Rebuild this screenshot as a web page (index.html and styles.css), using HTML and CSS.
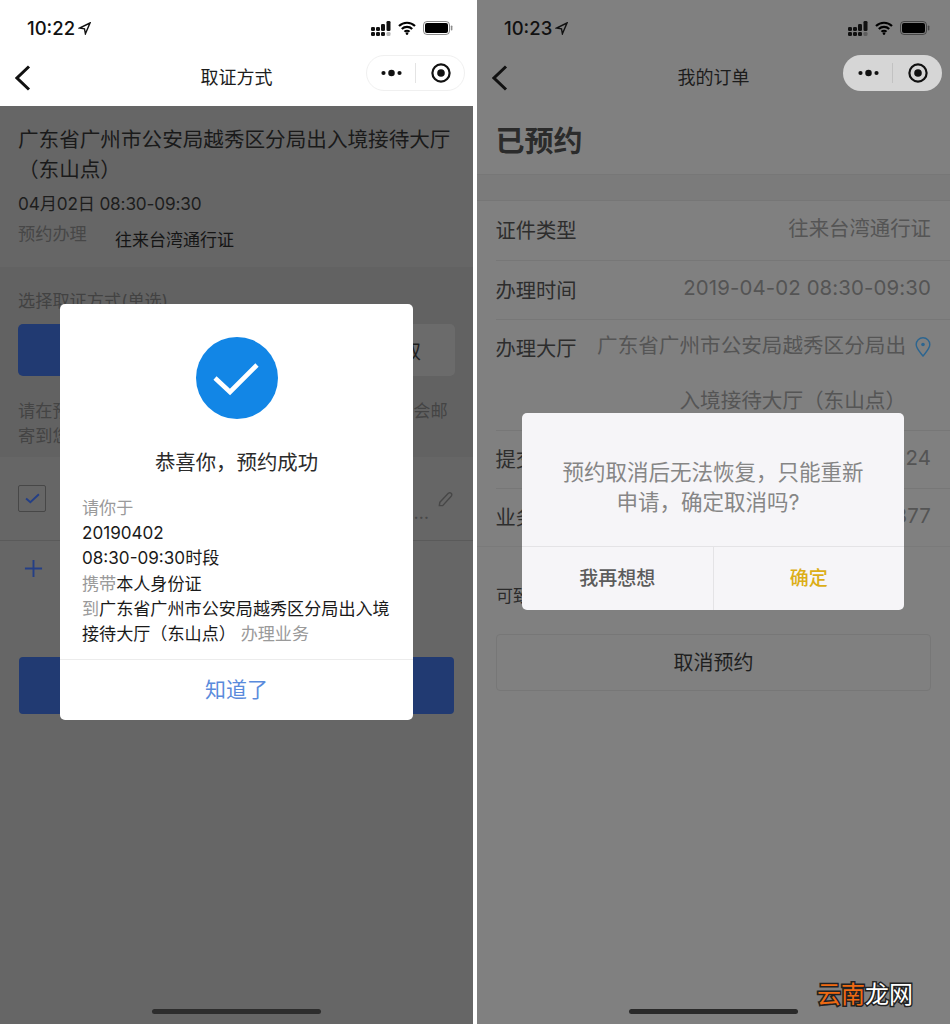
FILE: index.html
```html
<!DOCTYPE html>
<html lang="zh-CN">
<head>
<meta charset="utf-8">
<title>取证方式</title>
<link rel="stylesheet" href="styles.css">
</head>
<body>
<main class="screen">
  <section class="phone phone-light">
    <header class="top">
      <div class="status">
        <span class="time">10:22</span>
        <svg class="loc" viewBox="0 0 13 13"><path d="M12 1 1.5 6l5 .8.9 5z"/></svg>
        <span class="status-space"></span>
        <svg class="signal" viewBox="0 0 20 15"><rect x="0" y="6" width="4" height="4" rx="1.3"/><rect x="0" y="11" width="4" height="4" rx="1.3"/><rect x="5" y="6" width="4" height="4" rx="1.3"/><rect x="5" y="11" width="4" height="4" rx="1.3"/><rect x="10" y="3" width="4" height="7" rx="1.3"/><rect x="10" y="11" width="4" height="4" rx="1.3"/><rect x="15.500" y="0" width="4" height="10" rx="1.3"/><rect x="15.500" y="11" width="4" height="4" rx="1.3" opacity=".3"/></svg>
        <svg class="wifi" viewBox="0 0 18 14"><path d="M1 5a11.5 11.5 0 0 1 16 0M3.8 8a7.5 7.5 0 0 1 10.4 0M6.5 10.8a3.6 3.6 0 0 1 5 0" fill="none" stroke="#000" stroke-width="2.2"/><circle cx="9" cy="12.6" r="1.3"/></svg>
        <svg class="battery" viewBox="0 0 30 14"><rect x=".5" y=".5" width="26" height="13" rx="3.5" fill="none" stroke="#000" stroke-opacity=".45"/><rect x="2" y="2" width="23" height="10" rx="2"/><rect x="27.8" y="4.5" width="1.6" height="5" rx=".8" opacity=".45"/></svg>
      </div>
      <nav class="nav">
        <svg class="back" viewBox="0 0 16 26"><path d="M14 1.5 2 13l12 11.5" fill="none" stroke="#111" stroke-width="3"/></svg>
        <h1 class="nav-title">取证方式</h1>
        <div class="capsule capsule-plain">
          <svg class="cap-more" viewBox="0 0 22 8"><circle cx="2.6" cy="4" r="2.2"/><circle cx="11" cy="4" r="3.4"/><circle cx="19.4" cy="4" r="2.2"/></svg>
          <span class="cap-sep"></span>
          <svg class="cap-rec" viewBox="0 0 20 20"><circle cx="10" cy="10" r="8.6" fill="none" stroke="#111" stroke-width="2.2"/><circle cx="10" cy="10" r="3.8" fill="#111"/></svg>
        </div>
      </nav>
    </header>

    <div class="page page-left">
      <div class="hall">
        <h2 class="hall-name">广东省广州市公安局越秀区分局出入境接待大厅（东山点）</h2>
        <p class="hall-date">04月02日 08:30-09:30</p>
        <div class="hall-biz">
          <span class="hall-biz-label">预约办理</span>
          <span class="hall-biz-value">往来台湾通行证</span>
        </div>
      </div>
      <div class="pick">
        <p class="pick-label">选择取证方式(单选)</p>
        <div class="pick-btns">
          <span class="pick-btn pick-on">邮寄到家</span>
          <span class="pick-btn pick-off">现场领取</span>
        </div>
        <p class="pick-tip">请在预约办理时间到大厅办理业务，证件办理完成后会邮<br>寄到您的地址</p>
      </div>
      <div class="addr">
        <div class="addr-row">
          <span class="check"><svg viewBox="0 0 14 10"><path d="M1 5l4 3.500L13 1" fill="none" stroke="#243f86" stroke-width="1.800"/></svg></span>
          <span class="addr-more">…</span>
          <svg class="pencil" viewBox="0 0 18 18"><path d="M3 12 12 2.5a2 2 0 0 1 3 0 2 2 0 0 1 0 3L6 15.500H2.500z" fill="none" stroke="#474747" stroke-width="1.500"/></svg>
        </div>
        <div class="addr-add">
          <svg class="plus" viewBox="0 0 20 20"><path d="M10 1v18M1 10h18" stroke="#243f86" stroke-width="2" fill="none"/></svg>
        </div>
      </div>
      <div class="submit">确认</div>
      <div class="home home-a"></div>
    </div>

    <div class="modal modal-ok">
      <div class="ok-icon"><svg viewBox="0 0 82 82"><circle cx="41" cy="41" r="41" fill="#1286e6"/><path d="M19 41l15 14 27-27" fill="none" stroke="#fff" stroke-width="4.600"/></svg></div>
      <h3 class="ok-title">恭喜你，预约成功</h3>
      <div class="ok-body">
        <div class="muted">请你于</div>
        <div>20190402</div>
        <div>08:30-09:30时段</div>
        <div><span class="muted">携带</span>本人身份证</div>
        <div><span class="muted">到</span>广东省广州市公安局越秀区分局出入境接待大厅（东山点）<span class="muted"> 办理业务</span></div>
      </div>
      <div class="ok-foot">知道了</div>
    </div>
  </section>

  <section class="phone phone-dim">
    <header class="top">
      <div class="status">
        <span class="time">10:23</span>
        <svg class="loc" viewBox="0 0 13 13"><path d="M12 1 1.5 6l5 .8.9 5z"/></svg>
        <span class="status-space"></span>
        <svg class="signal" viewBox="0 0 20 15"><rect x="0" y="6" width="4" height="4" rx="1.3"/><rect x="0" y="11" width="4" height="4" rx="1.3"/><rect x="5" y="6" width="4" height="4" rx="1.3"/><rect x="5" y="11" width="4" height="4" rx="1.3"/><rect x="10" y="3" width="4" height="7" rx="1.3"/><rect x="10" y="11" width="4" height="4" rx="1.3"/><rect x="15.500" y="0" width="4" height="10" rx="1.3"/><rect x="15.500" y="11" width="4" height="4" rx="1.3" opacity=".3"/></svg>
        <svg class="wifi" viewBox="0 0 18 14"><path d="M1 5a11.5 11.5 0 0 1 16 0M3.8 8a7.5 7.5 0 0 1 10.4 0M6.5 10.8a3.6 3.6 0 0 1 5 0" fill="none" stroke="#000" stroke-width="2.2"/><circle cx="9" cy="12.6" r="1.3"/></svg>
        <svg class="battery" viewBox="0 0 30 14"><rect x=".5" y=".5" width="26" height="13" rx="3.5" fill="none" stroke="#000" stroke-opacity=".45"/><rect x="2" y="2" width="23" height="10" rx="2"/><rect x="27.8" y="4.5" width="1.6" height="5" rx=".8" opacity=".45"/></svg>
      </div>
      <nav class="nav">
        <svg class="back" viewBox="0 0 16 26"><path d="M14 1.5 2 13l12 11.5" fill="none" stroke="#111" stroke-width="3"/></svg>
        <h1 class="nav-title">我的订单</h1>
        <div class="capsule capsule-fill">
          <svg class="cap-more" viewBox="0 0 22 8"><circle cx="2.6" cy="4" r="2.2"/><circle cx="11" cy="4" r="3.4"/><circle cx="19.4" cy="4" r="2.2"/></svg>
          <span class="cap-sep"></span>
          <svg class="cap-rec" viewBox="0 0 20 20"><circle cx="10" cy="10" r="8.6" fill="none" stroke="#111" stroke-width="2.2"/><circle cx="10" cy="10" r="3.8" fill="#111"/></svg>
        </div>
      </nav>
    </header>

    <div class="page page-right">
      <h2 class="order-state">已预约</h2>
      <div class="band"></div>
      <div class="rows">
        <div class="row row-first">
          <span class="row-label">证件类型</span>
          <span class="row-value">往来台湾通行证</span>
        </div>
        <div class="row">
          <span class="row-label">办理时间</span>
          <span class="row-value row-num">2019-04-02 08:30-09:30</span>
        </div>
        <div class="row row-tall">
          <span class="row-label">办理大厅</span>
          <span class="row-hall">广东省广州市公安局越秀区分局出入境接待大厅（东山点）</span>
          <svg class="pin" viewBox="0 0 16 20"><path d="M8 19C4.500 14.500 1.200 11.500 1.200 7.500a6.800 6.800 0 0 1 13.600 0C14.800 11.500 11.500 14.500 8 19z" fill="none" stroke="#2c6590" stroke-width="1.400"/><circle cx="8" cy="7.500" r="1.800" fill="#2c6590"/></svg>
        </div>
        <div class="row row-short">
          <span class="row-label">提交时间</span>
          <span class="row-value row-num">2019-04-01 10:22:24</span>
        </div>
        <div class="row row-short row-last">
          <span class="row-label">业务编号</span>
          <span class="row-value row-num">20190401377</span>
        </div>
      </div>
      <p class="order-tip">可致电大厅咨询办理业务</p>
      <div class="cancel">取消预约</div>
      <div class="home home-b"></div>
    </div>

    <div class="modal modal-ask">
      <p class="ask-text">预约取消后无法恢复，只能重新<br><span class="ask-line">申请，确定取消吗?</span></p>
      <div class="ask-foot">
        <span class="ask-btn ask-no">我再想想</span>
        <span class="ask-btn ask-yes">确定</span>
      </div>
    </div>
  </section>
</main>
<div class="mark"><span class="mark-o">云南</span><span class="mark-w">龙网</span></div>
</body>
</html>
```
FILE: styles.css
```css
* { box-sizing: border-box; }
html, body { margin: 0; padding: 0; }
body {
  position: relative;
  width: 950px;
  height: 1024px;
  overflow: hidden;
  background: #fff;
  font-family: Inter, "Noto Sans CJK SC", sans-serif;
  color: #222;
}
h1, h2, h3, p { margin: 0; font-weight: 400; }

.screen { display: flex; justify-content: space-between; height: 1024px; }
.phone { position: relative; display: flex; flex-direction: column; width: 473px; height: 1024px; }
.phone-light .top { background: #fff; }
.phone-dim { background: #808080; }

/* status + nav */
.top { flex: none; height: 106px; }
.status { display: flex; align-items: center; height: 56px; padding: 0 20px 0 27px; }
.time { font-size: 18.5px; font-weight: 500; color: #111; }
.loc { width: 13px; height: 13px; margin-left: 3px; fill: none; stroke: #111; stroke-width: 1.4; }
.status-space { flex: 1; }
.signal { width: 20px; height: 15px; fill: #111; }
.wifi { width: 18px; height: 14px; margin-left: 7px; }
.battery { width: 30px; height: 14px; margin-left: 7px; }

.nav { display: grid; grid-template-columns: 1fr auto 1fr; align-items: center; height: 50px; }
.back { width: 16px; height: 26px; margin: -6px 0 0 15px; }
.nav-title { font-size: 18px; line-height: 24px; margin-top: -6px; color: #1c1c1c; }
.capsule {
  justify-self: end;
  display: flex;
  align-items: center;
  width: 99px;
  height: 36px;
  margin: -16px 8px 0 0;
  border: 1px solid transparent;
  border-radius: 18px;
  padding-left: 14px;
}
.capsule-plain { border-color: #f0f0f0; background: #fff; }
.capsule-fill { background: #d6d6d6; }
.cap-more { width: 21px; height: 8px; fill: #111; }
.cap-sep { width: 1px; height: 20px; margin: 0 15px 0 13px; background: #e4e4e4; }
.capsule-fill .cap-sep { background: #c2c2c2; }
.cap-rec { width: 20px; height: 20px; }

/* left page */
.page { flex: 1; display: flex; flex-direction: column; }
.page-left { background: #666; color: #1d1d1d; }
.hall { height: 161px; padding: 19px 18px 0; }
.hall-name { font-size: 20.6px; line-height: 30px; color: #1a1a1a; }
.hall-date { font-size: 17.2px; line-height: 38px; letter-spacing: -.15px; color: #1d1d1d; }
.hall-biz { display: flex; margin-top: -2px; }
.hall-biz-label { width: 97px; font-size: 17.2px; line-height: 26px; color: #474747; }
.hall-biz-value { font-size: 17px; line-height: 26px; margin-top: 6px; color: #151515; }

.pick { height: 190px; padding: 21px 18px 0; background: #626262; }
.pick-label { font-size: 17.2px; line-height: 26px; color: #424242; }
.pick-btns { display: flex; gap: 6px; margin-top: 10px; height: 52px; }
.pick-btn { flex: 1; display: flex; align-items: center; border-radius: 5px; font-size: 20.5px; }
.pick-on { justify-content: center; background: #213a72; color: #ccc; }
.pick-off { justify-content: flex-end; padding-right: 34px; background: #6b6b6b; color: #1f1f1f; }
.pick-tip { margin-top: 22px; font-size: 17.2px; line-height: 25px; color: #444; }

.addr { height: 141px; background: #666; }
.addr-row { display: flex; height: 84px; padding: 28px 19px 0 18px; border-bottom: 1px solid #5a5a5a; }
.check { display: flex; align-items: center; justify-content: center; width: 28px; height: 27px; border: 1px solid #474747; border-radius: 2px; }
.check svg { width: 15px; height: 11px; }
.addr-more { margin-left: auto; margin-right: 8px; margin-top: 16px; font-size: 18px; line-height: 24px; color: #484848; }
.pencil { width: 17px; height: 17px; margin-top: 6px; }
.addr-add { padding: 18px 0 0 24px; }
.plus { display: block; width: 19px; height: 19px; }

.submit {
  display: flex;
  align-items: center;
  justify-content: center;
  height: 57px;
  margin: 59px 19px 0;
  border-radius: 4px;
  background: #213a72;
  color: #ccc;
  font-size: 20.5px;
}
.home { align-self: center; width: 169px; height: 5px; margin-top: auto; margin-bottom: 10px; border-radius: 3px; background: #2d2d2d; }
.home-b { background: #2a2a2a; }

/* modal shared */
.modal { position: absolute; border-radius: 5px; }

/* success modal */
.modal-ok { left: 60px; top: 304px; width: 353px; height: 416px; background: #fff; display: flex; flex-direction: column; }
.ok-icon { width: 82px; height: 82px; margin: 33px auto 0; }
.ok-icon svg { display: block; width: 82px; height: 82px; }
.ok-title { margin-top: 29px; font-size: 20.4px; line-height: 30px; text-align: center; color: #2b2b2b; }
.ok-body { margin-top: 17px; padding: 0 22px; font-size: 17.1px; line-height: 25.2px; color: #1a1a1a; }
.muted { color: #9a9a9a; }
.ok-foot {
  margin-top: auto;
  height: 61px;
  padding-bottom: 4px;
  display: flex;
  align-items: center;
  justify-content: center;
  border-top: 1px solid #ececec;
  font-size: 21px;
  color: #5a8bdc;
}

/* right page */
.page-right { color: #2a2a2a; }
.order-state { height: 69px; padding: 0 18.5px 2px; display: flex; align-items: center; font-size: 29px; font-weight: 700; border-bottom: 1px solid #777; color: #2b2b2b; }
.band { height: 26px; background: #7b7b7b; border-bottom: 1px solid #767676; }
.rows { padding-left: 18.5px; }
.row { display: flex; align-items: center; justify-content: space-between; height: 59px; padding-right: 19px; border-bottom: 1px solid #777; }
.row-first { height: 60px; }
.row-short { height: 58px; }
.row-label { font-size: 20.3px; line-height: 30px; color: #2d2d2d; margin-top: 1px; }
.row-value { font-size: 20.4px; line-height: 30px; color: #555; margin-top: -4px; }
.row-num { color: #545454; letter-spacing: .12px; }
.row-tall { align-items: flex-start; height: 111px; }
.row-tall .row-label { line-height: 58px; margin-top: 0; }
.row-hall { width: 309px; margin: -2px 9px 0 auto; font-size: 20.6px; line-height: 55px; text-align: right; color: #555; }
.pin { flex: none; width: 16px; height: 20px; margin-top: 17px; }
.row-last { margin-left: -18.5px; padding-left: 18.5px; border-bottom: 1px solid #7a7a7a; }
.order-tip { margin: 36px 19px 0; font-size: 17px; line-height: 26px; color: #2a2a2a; }
.cancel {
  display: flex;
  align-items: center;
  justify-content: center;
  height: 57px;
  margin: 25px 19px 0 19px;
  padding-bottom: 2px;
  border: 1px solid #777;
  border-radius: 4px;
  font-size: 20px;
  color: #1f1f1f;
  background: #808080;
}

/* confirm modal */
.modal-ask { left: 45px; top: 413px; width: 382px; height: 197px; background: #f6f5f8; display: flex; flex-direction: column; }
.ask-text { height: 133px; padding-top: 44px; font-size: 21.5px; line-height: 30px; text-align: center; color: #868686; }
.ask-line { display: inline-block; margin-right: 10px; }
.ask-foot { flex: 1; display: flex; border-top: 1px solid #e4e3e6; }
.ask-btn { flex: 1; display: flex; align-items: center; justify-content: center; padding-bottom: 4px; font-size: 19px; font-weight: 500; }
.ask-no { color: #5c5c5c; border-right: 1px solid #e4e3e6; }
.ask-yes { color: #dcae17; }

/* watermark */
.mark {
  position: absolute;
  left: 817px;
  top: 978px;
  font-size: 24px;
  line-height: 34px;
  white-space: nowrap;
  -webkit-text-stroke: 3px #222;
  paint-order: stroke fill;
}
.mark-o { color: #ef6a12; }
.mark-w { color: #fff; }
```
